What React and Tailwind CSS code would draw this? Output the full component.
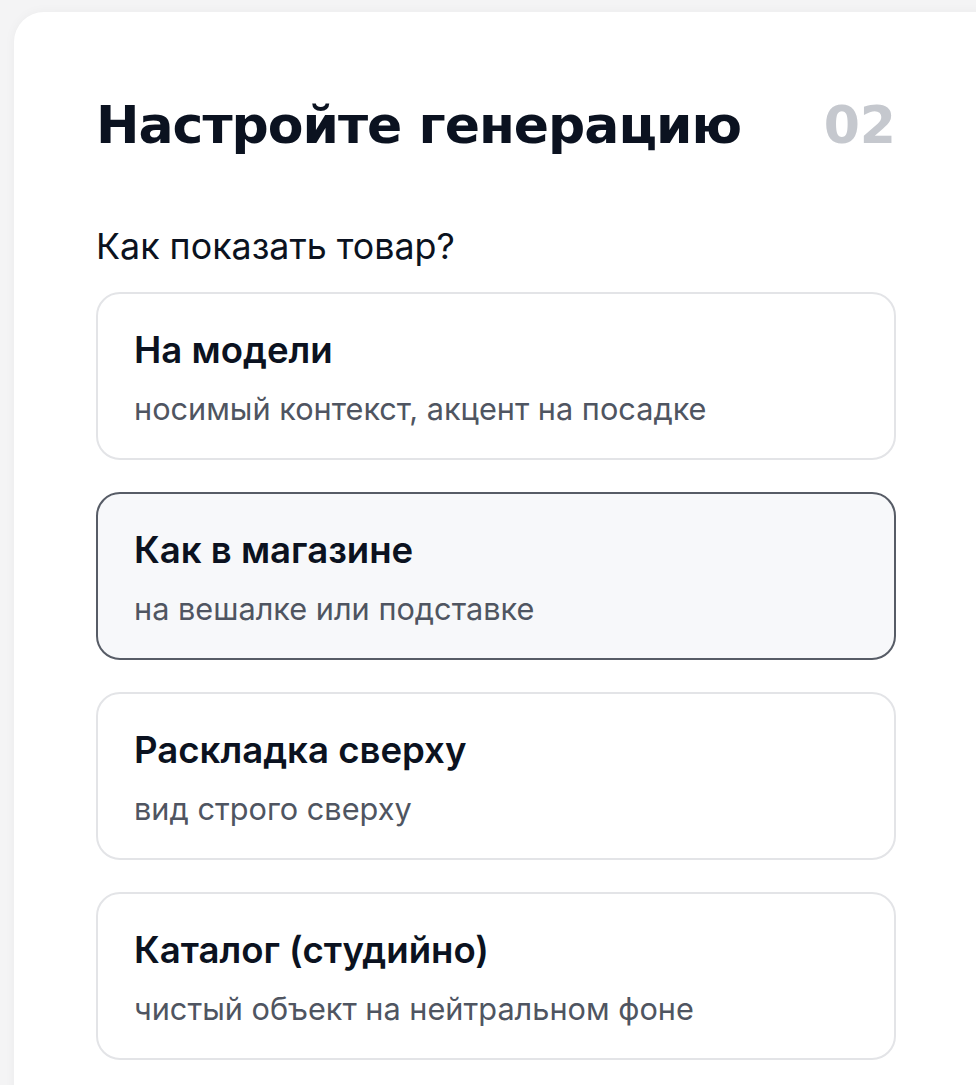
const options = [
	{
		title: "На модели",
		hint: "носимый контекст, акцент на посадке"
	},
	{
		title: "Как в магазине",
		hint: "на вешалке или подставке",
		active: true
	},
	{
		title: "Раскладка сверху",
		hint: "вид строго сверху"
	},
	{
		title: "Каталог (студийно)",
		hint: "чистый объект на нейтральном фоне"
	}
];

const App = () => {
	return (
		<div className="min-h-[1085px] bg-[#f4f4f5] pt-[12px] pl-[14px] overflow-hidden" style={{ fontFamily: "Inter, 'Noto Sans', sans-serif" }}>
			<div className="w-[1000px] min-h-[1100px] bg-white rounded-tl-[30px] shadow-[0_0_12px_rgba(0,0,0,0.04)] pl-[82px] pr-[120px] pt-[81px]">
				<div className="w-[800px]">
					<div className="flex items-center justify-between">
						<h1 className="text-[#0b1220] text-[52px] leading-[64px] font-bold tracking-[-1px]" style={{ fontFamily: "'DejaVu Sans', sans-serif" }}>
							Настройте генерацию
						</h1>
						<span className="text-[#c5c8ce] text-[52px] leading-[64px] font-bold" style={{ fontFamily: "'DejaVu Sans', sans-serif" }}>
							02
						</span>
					</div>
					<p className="mt-[67px] text-[#0b1220] text-[35.8px] leading-[44px]">Как показать товар?</p>
					<div className="mt-[24px] flex flex-col gap-[32px]">
						{options.map((option) => (
							<div
								key={option.title}
								className={option.active
									? "h-[168px] rounded-[24px] border-2 border-[#575c66] bg-[#f7f8fa] px-[36px] pt-[34px]"
									: "h-[168px] rounded-[24px] border-2 border-[#e3e4e7] bg-white px-[36px] pt-[34px]"}
							>
								<div className="text-[#0b1220] text-[36.6px] leading-[44px] font-semibold">{option.title}</div>
								<div className="mt-[17px] text-[#4f5561] text-[30.7px] leading-[40px]">{option.hint}</div>
							</div>
						))}
					</div>
				</div>
			</div>
		</div>
	);
};

export default App;
